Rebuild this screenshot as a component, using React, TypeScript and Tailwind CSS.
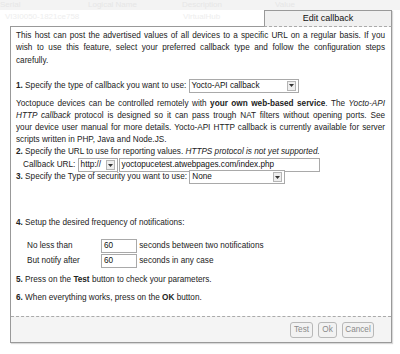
import React from "react";

const font = { fontFamily: '"Liberation Sans", Arial, sans-serif' };

function Select({ value, width }: { value: string; width: string }) {
  return (
    <span
      className={`inline-flex items-center h-[14px] border border-[#a9a9a9] bg-white shrink-0 ${width}`}
    >
      <span className="flex-1 pl-[2px] text-[8.2px] leading-[12px] text-[#111] whitespace-nowrap overflow-hidden">{value}</span>
      <span className="w-[9px] h-[10px] mr-[2px] border border-[#b5b5b5] bg-[#eeeeee] flex items-center justify-center">
        <svg width="5" height="3" viewBox="0 0 5 3">
          <path d="M0 0 L5 0 L2.5 3 Z" fill="#333" />
        </svg>
      </span>
    </span>
  );
}

function Input({ value, width }: { value: string; width: string }) {
  return (
    <span
      className={`inline-flex items-center h-[14px] border border-[#a9a9a9] bg-white shrink-0 pl-[2px] text-[8.2px] leading-[12px] text-[#111] whitespace-nowrap ${width}`}
    >
      {value}
    </span>
  );
}

function Btn({ label, w }: { label: string; w: string }) {
  return (
    <span
      className={`inline-flex items-center justify-center h-[16px] ${w} border border-[#b8b8b8] rounded-[3px] bg-[#f2f2f2] text-[8.2px] text-[#8a8a8a]`}
    >
      {label}
    </span>
  );
}

function JL({ children }: { children: React.ReactNode }) {
  return (
    <span className="block whitespace-nowrap text-justify [text-align-last:justify]">{children}</span>
  );
}

export default function App() {
  return (
    <div className="relative w-[400px] h-[354px] bg-white overflow-hidden" style={font}>
      {/* faint background table */}
      <div className="h-[10px] bg-[#f3f3f3] flex text-[8px] leading-[10px] text-[#e6e6e6]">
        <span className="w-[88px]">Serial</span>
        <span className="w-[94px]">Logical Name</span>
        <span className="w-[93px]">Description</span>
        <span>Value</span>
      </div>
      <div className="flex text-[8px] leading-[14px] text-[#eeeeee]">
        <span className="w-[183px] pl-[5px]">VI3I0050-1821ce758</span>
        <span>VirtualHub</span>
      </div>

      {/* dialog */}
      <div className="absolute left-[10px] top-[10px] w-[382px] flex flex-col shadow-[1px_1px_1px_rgba(0,0,0,0.15)]">
        <div className="flex h-[17px]">
          <div className="flex-1 border-b border-[#999]" />
          <div className="w-[128px] bg-[#f0f0f0] border-t border-l border-r border-[#999] border-b border-b-[#aaa] border-dashed [border-top-style:solid] [border-left-style:solid] [border-right-style:solid] flex items-center justify-center text-[9px] text-[#111]">
            Edit callback
          </div>
        </div>
        <div className="border-l border-r border-b border-[#999] bg-white">
          <div className="pl-[5px] pr-[6px] pt-[3px] text-[8.2px] text-[#222]">
            <p className="leading-[12.4px]">
              <JL>This host can post the advertised values of all devices to a specific URL on a regular basis. If you</JL>
              <JL>wish to use this feature, select your preferred callback type and follow the configuration steps</JL>
              <span className="block">carefully.</span>
            </p>
            <div className="mt-[12px] flex items-center h-[13px] leading-[12px]">
              <span><b>1.</b> Specify the type of callback you want to use:&nbsp;</span>
              <Select value="Yocto-API callback" width="w-[110px]" />
            </div>
            <p className="mt-[6px] leading-[12px]">
              <JL>Yoctopuce devices can be controlled remotely with <b>your own web-based service</b>. The <i>Yocto-API</i></JL>
              <JL><i>HTTP callback</i> protocol is designed so it can pass trough NAT filters without opening ports. See</JL>
              <JL>your device user manual for more details. Yocto-API HTTP callback is currently available for server</JL>
              <span className="block">scripts written in PHP, Java and Node.JS.</span>
            </p>
            <p className="leading-[12px]">
              <b>2.</b> Specify the URL to use for reporting values. <i>HTTPS protocol is not yet supported.</i>
            </p>
            <div className="mt-[1px] flex items-center h-[12px] pl-[7px] leading-[12px]">
              <span>Callback URL:&nbsp;</span>
              <Select value="http://" width="w-[40px]" />
              <Input value="yoctopucetest.atwebpages.com/index.php" width="w-[201px] ml-[1px]" />
            </div>
            <div className="flex items-center h-[12px] leading-[12px]">
              <span><b>3.</b> Specify the Type of security you want to use:&nbsp;</span>
              <Select value="None" width="w-[96px]" />
            </div>
            <p className="mt-[34px] leading-[12px]"><b>4.</b> Setup the desired frequency of notifications:</p>
            <div className="mt-[9px] flex items-center h-[15px] pl-[11px] leading-[12px]">
              <span className="w-[74px]">No less than</span>
              <Input value="60" width="w-[36px]" />
              <span>&nbsp;seconds between two notifications</span>
            </div>
            <div className="flex items-center h-[15px] pl-[11px] leading-[12px]">
              <span className="w-[74px]">But notify after</span>
              <Input value="60" width="w-[36px]" />
              <span>&nbsp;seconds in any case</span>
            </div>
            <p className="mt-[6px] leading-[12px]"><b>5.</b> Press on the <b>Test</b> button to check your parameters.</p>
            <p className="mt-[6px] leading-[12px]"><b>6.</b> When everything works, press on the <b>OK</b> button.</p>
          </div>
          <div className="mt-[12px] border-t border-dashed border-[#aaa] bg-[#f4f4f4] h-[26px] flex items-center justify-end gap-[5px] pr-[17px]">
            <Btn label="Test" w="w-[23px]" />
            <Btn label="Ok" w="w-[19px]" />
            <Btn label="Cancel" w="w-[32px]" />
          </div>
        </div>
      </div>
    </div>
  );
}
